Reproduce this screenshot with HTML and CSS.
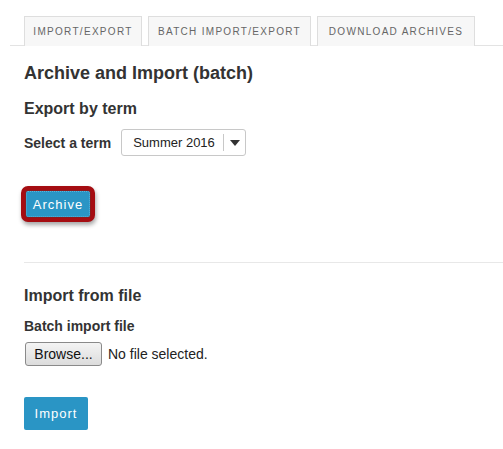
FILE: index.html
```html
<!DOCTYPE html>
<html>
<head>
<meta charset="utf-8">
<link rel="stylesheet" href="styles.css">
</head>
<body>
<div class="page">
  <nav class="tabs">
    <span class="tab tab-1">Import/Export</span>
    <span class="tab tab-2">Batch Import/Export</span>
    <span class="tab tab-3">Download Archives</span>
  </nav>
  <main class="content">
    <h2 class="title">Archive and Import (batch)</h2>
    <h3 class="subtitle">Export by term</h3>
    <div class="term-row">
      <label class="label">Select a term</label>
      <div class="select">
        <span class="select-value">Summer 2016</span>
        <span class="select-arrow"><svg width="10" height="6" viewBox="0 0 10 6"><path d="M0 0H10L5 6Z" fill="#333"/></svg></span>
      </div>
    </div>
    <div class="archive-wrap">
      <div class="highlight"><button class="btn btn-archive">Archive</button></div>
    </div>
    <hr class="divider">
    <h3 class="subtitle import-title">Import from file</h3>
    <div class="label batch-label">Batch import file</div>
    <div class="file-row">
      <button class="browse">Browse...</button>
      <span class="file-text">No file selected.</span>
    </div>
    <button class="btn btn-import">Import</button>
  </main>
</div>
</body>
</html>
```
FILE: styles.css
```css
html, body { margin: 0; padding: 0; background: #fff; }
body { font-family: "Liberation Sans", Arial, sans-serif; color: #333; }
.page { padding-top: 16px; }
.tabs {
  display: flex;
  gap: 6px;
  margin-left: 10px;
  padding-left: 14px;
  border-bottom: 1px solid #e3e3e3;
  height: 29px;
}
.tab {
  box-sizing: border-box;
  height: 30px;
  display: flex;
  align-items: center;
  justify-content: center;
  background: #f7f7f7;
  border: 1px solid #dedede;
  border-bottom: none;
  font-size: 10px;
  letter-spacing: 1.3px;
  text-transform: uppercase;
  color: #666;
  white-space: nowrap;
}
.tab-1 { width: 118px; }
.tab-2 { width: 163px; }
.tab-3 { width: 158px; }
.content { padding-left: 24px; }
.title { font-size: 18px; font-weight: bold; margin: 16px 0 0; line-height: 22px; }
.subtitle { font-size: 16px; font-weight: bold; margin: 15px 0 0; line-height: 20px; }
.term-row { display: flex; align-items: center; gap: 6px; margin-top: 10px; }
.label { font-size: 14px; font-weight: bold; }
.select {
  box-sizing: border-box;
  width: 125px; height: 27px;
  margin-left: 4px;
  border: 1px solid #c8c8c8;
  border-radius: 3px;
  display: flex; align-items: center;
  font-size: 13px; color: #222;
}
.select-value { flex: 1; padding-left: 11px; }
.select-arrow {
  width: 21px; height: 17px;
  border-left: 1px solid #c8c8c8;
  display: flex; align-items: center; justify-content: center;
}
.archive-wrap { margin-top: 30px; margin-left: -3px; }
.highlight {
  display: inline-block;
  border: 4px solid #a50d12;
  border-radius: 7px;
  padding: 1px;
  background: #8b1a1d;
  box-shadow: 1px 3px 4px rgba(0,0,0,0.35);
}
.btn {
  font-family: "Liberation Sans", Arial, sans-serif;
  color: #fff;
  background: #2a95c5;
  border: none;
  border-radius: 2px;
  letter-spacing: 1px;
  font-size: 13px;
  display: block;
}
.btn-archive { width: 64px; height: 26px; padding: 0; border: 1px dotted #5ab4da; box-sizing: border-box; }
.divider { border: none; border-top: 1px solid #e8e8e8; margin: 40px 0 0; }
.import-title { margin-top: 23px; }
.batch-label { margin-top: 11px; line-height: 18px; }
.file-row { display: flex; align-items: center; gap: 6px; margin-top: 7px; }
.browse {
  box-sizing: border-box;
  width: 77px; height: 24px;
  font-family: "Liberation Sans", Arial, sans-serif;
  font-size: 14px; color: #111;
  border: 1px solid #8a8a8a;
  border-radius: 3px;
  background: linear-gradient(#f4f4f4, #dcdcdc);
  padding: 0;
  margin-left: 1px;
}
.file-text { font-size: 14px; color: #222; }
.btn-import { width: 64px; height: 33px; margin-top: 31px; padding: 0; }
```
